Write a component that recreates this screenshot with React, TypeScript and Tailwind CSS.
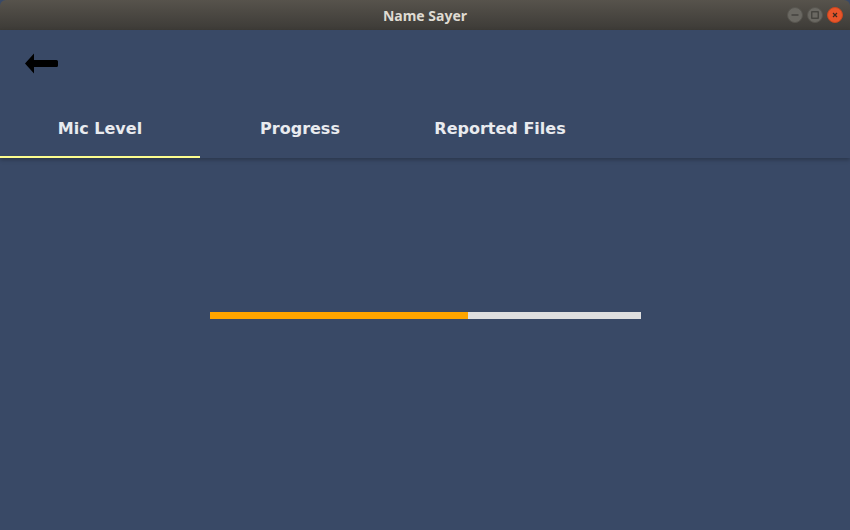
const tabs = ["Mic Level", "Progress", "Reported Files"];

const WindowButton = ({ kind }: { kind: "min" | "max" | "close" }) => {
  const close = kind === "close";
  return (
    <div
      className={`w-[16px] h-[16px] rounded-full flex items-center justify-center border ${
        close ? "bg-[#e9552a] border-[#c8471f]" : "bg-[#6a6862] border-[#57554f]"
      }`}
    >
      <svg width="10" height="10" viewBox="0 0 10 10">
        {kind === "min" && <line x1="1.5" y1="5" x2="8.5" y2="5" stroke="#3b3a36" strokeWidth="1.2" />}
        {kind === "max" && <rect x="1.8" y="1.8" width="6.4" height="6.4" fill="none" stroke="#3b3a36" strokeWidth="1.1" />}
        {kind === "close" && (
          <path d="M3 3 L7 7 M7 3 L3 7" stroke="#3b2a20" strokeWidth="1.2" />
        )}
      </svg>
    </div>
  );
};

export default function App() {
  const level = 0.6;
  return (
    <div className="w-[850px] h-[530px] flex flex-col bg-[#394966] overflow-hidden font-['DejaVu_Sans',sans-serif]">
      <div className="relative h-[30px] shrink-0 bg-gradient-to-b from-[#57534c] to-[#3d3b37] flex items-center justify-center rounded-t-[6px]">
        <span className="text-[14px] font-bold text-[#dfdbd2] font-['Noto_Sans','DejaVu_Sans',sans-serif]">Name Sayer</span>
        <div className="absolute right-[7px] top-[7px] flex gap-[4px]">
          <WindowButton kind="min" />
          <WindowButton kind="max" />
          <WindowButton kind="close" />
        </div>
      </div>

      <div className="relative z-10 h-[128px] shrink-0 flex flex-col shadow-[0_2px_4px_rgba(0,0,0,0.25)]">
        <div className="h-[70px] pl-[25px] pt-[23px]">
          <svg width="34" height="21" viewBox="0 0 34 21">
            <path d="M0 10.5 L9 0.5 L9 7 L31.5 7 Q33 7 33 8.5 L33 12.5 Q33 14 31.5 14 L9 14 L9 20.5 Z" fill="#000" />
          </svg>
        </div>
        <div className="flex flex-1">
          {tabs.map((t, i) => (
            <div
              key={t}
              className={`w-[200px] flex items-center justify-center pt-[2px] border-b-2 ${
                i === 0 ? "border-[#fdfd8e]" : "border-transparent"
              }`}
            >
              <span className="text-[16px] font-bold text-[#e9ebef]">{t}</span>
            </div>
          ))}
        </div>
      </div>

      <div className="flex-1 flex justify-center pt-[154px]">
        <div className="w-[431px] h-[7px] bg-[#dfdfdf] flex">
          <div className="h-full bg-[#ffa500]" style={{ width: `${level * 100}%` }} />
        </div>
      </div>
    </div>
  );
}
